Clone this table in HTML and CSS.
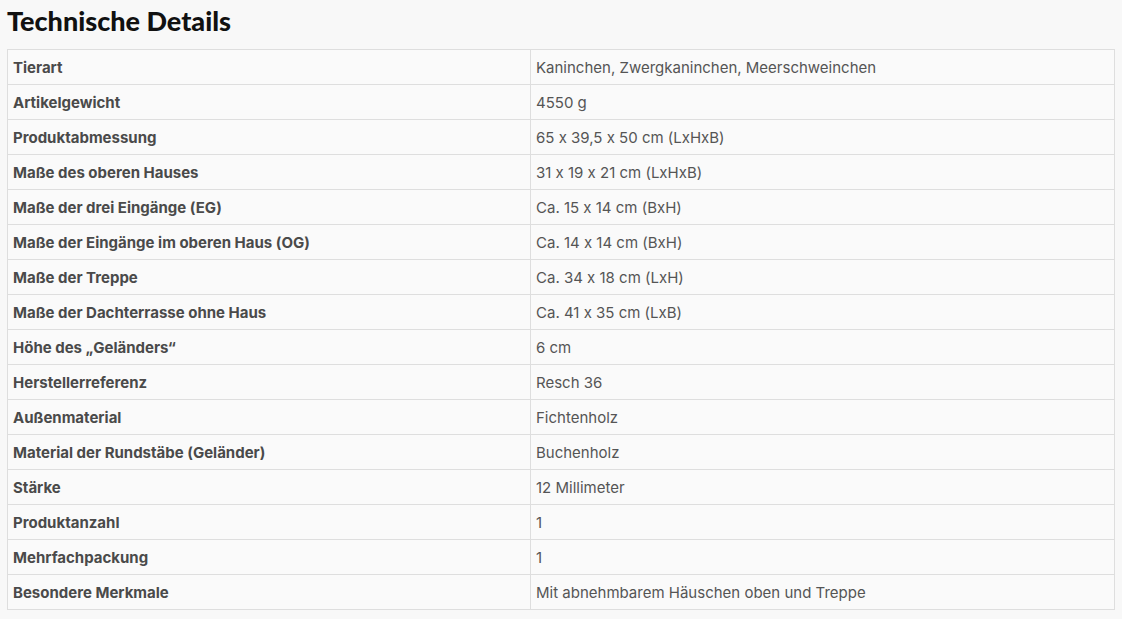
FILE: index.html
```html
<!DOCTYPE html>
<html lang="de">
<head>
<meta charset="utf-8">
<title>Technische Details</title>
<link rel="stylesheet" href="styles.css">
</head>
<body>
<h2 class="title">Technische Details</h2>
<table class="details">
<tbody>
<tr><th>Tierart</th><td>Kaninchen, Zwergkaninchen, Meerschweinchen</td></tr>
<tr><th>Artikelgewicht</th><td>4550 g</td></tr>
<tr><th>Produktabmessung</th><td>65 x 39,5 x 50 cm (LxHxB)</td></tr>
<tr><th>Maße des oberen Hauses</th><td>31 x 19 x 21 cm (LxHxB)</td></tr>
<tr><th>Maße der drei Eingänge (EG)</th><td>Ca. 15 x 14 cm (BxH)</td></tr>
<tr><th>Maße der Eingänge im oberen Haus (OG)</th><td>Ca. 14 x 14 cm (BxH)</td></tr>
<tr><th>Maße der Treppe</th><td>Ca. 34 x 18 cm (LxH)</td></tr>
<tr><th>Maße der Dachterrasse ohne Haus</th><td>Ca. 41 x 35 cm (LxB)</td></tr>
<tr><th>Höhe des „Geländers“</th><td>6 cm</td></tr>
<tr><th>Herstellerreferenz</th><td>Resch 36</td></tr>
<tr><th>Außenmaterial</th><td>Fichtenholz</td></tr>
<tr><th>Material der Rundstäbe (Geländer)</th><td>Buchenholz</td></tr>
<tr><th>Stärke</th><td>12 Millimeter</td></tr>
<tr><th>Produktanzahl</th><td>1</td></tr>
<tr><th>Mehrfachpackung</th><td>1</td></tr>
<tr><th>Besondere Merkmale</th><td>Mit abnehmbarem Häuschen oben und Treppe</td></tr>
</tbody>
</table>
</body>
</html>
```
FILE: styles.css
```css
html, body {
  margin: 0;
  padding: 0;
  background: #f8f8f8;
}
body {
  padding: 5px 7px 0 7px;
  font-family: Inter, "Noto Sans", sans-serif;
  font-feature-settings: "calt" 0;
  color: #4d4d4d;
}
.title {
  margin: 0 0 12px 0;
  font-family: "Lato", sans-serif;
  font-weight: 900;
  font-size: 27px;
  line-height: 32px;
  color: #111;
}
.details {
  width: 1108px;
  border-collapse: collapse;
  background: #fafafa;
  font-size: 15px;
}
.details th,
.details td {
  border: 1px solid #dedede;
  height: 33px;
  padding: 1px 5px 0 5px;
  text-align: left;
  vertical-align: middle;
  line-height: 20px;
}
.details th {
  width: 512px;
  font-weight: 700;
  color: #4a4a4a;
}
.details td {
  font-weight: 400;
  color: #555;
}
```
